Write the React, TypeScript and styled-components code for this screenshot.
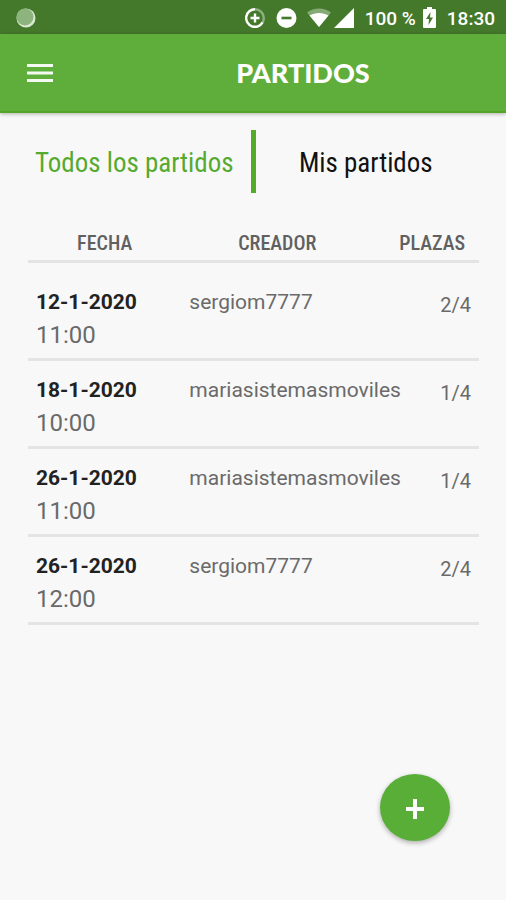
import React, { useState } from "react";
import styled, { createGlobalStyle } from "styled-components";

const GlobalStyle = createGlobalStyle`
  *, *::before, *::after { box-sizing: border-box; }
  body {
    margin: 0;
    background: #f8f8f8;
    color: #6a6a6a;
    font-family: Roboto, "Liberation Sans", sans-serif;
  }
  button { font: inherit; border: 0; background: none; padding: 0; cursor: pointer; }
`;

const Screen = styled.div`
  display: flex;
  flex-direction: column;
  min-height: 100vh;
`;

const StatusBar = styled.div`
  display: flex;
  align-items: center;
  justify-content: space-between;
  height: 34px;
  padding: 1px 11px 0 16px;
  background: #44792b;
  color: #fff;
`;

const StatusGroup = styled.div`
  display: flex;
  align-items: center;
`;

const StatusIcon = styled.svg<{ $gap?: number }>`
  display: block;
  flex: none;
  margin-right: ${(p) => p.$gap ?? 0}px;
`;

const StatusText = styled.span<{ $gap?: number }>`
  padding-top: 2px;
  font-size: 19px;
  line-height: 24px;
  font-weight: 500;
  white-space: nowrap;
  margin-right: ${(p) => p.$gap ?? 0}px;
`;

const AppBar = styled.header`
  display: grid;
  grid-template-columns: 80px 1fr;
  align-items: center;
  height: 79px;
  background: #5fae3c;
  border-bottom: 2px solid #54a525;
  box-shadow: 0 1px 4px rgba(0, 0, 0, 0.3);
`;

const MenuButton = styled.button`
  display: flex;
  align-items: center;
  justify-content: center;
  width: 80px;
  height: 48px;
`;

const Title = styled.h1`
  margin: 0;
  padding-left: 20px;
  text-align: center;
  color: #fff;
  font-family: Lato, "Liberation Sans", sans-serif;
  font-size: 27px;
  line-height: 32px;
  font-weight: 900;
`;

const Tabs = styled.div`
  display: grid;
  grid-template-columns: 1fr 5px 1fr;
  align-items: center;
  margin-top: 17px;
`;

const Tab = styled.button<{ $active: boolean }>`
  && {
    padding-top: 3px;
    font-family: "Roboto Condensed", "Liberation Sans Narrow", Roboto, sans-serif;
    font-size: 27px;
    line-height: 60px;
    white-space: nowrap;
    color: ${(p) => (p.$active ? "#55aa2f" : "#111")};
  }
  &&:first-child { padding-left: 18px; }
  &&:last-child { padding-right: 30px; }
`;

const TabDivider = styled.div`
  height: 63px;
  background: #54ab28;
`;

const TableArea = styled.main`
  padding: 37px 27px 0 28px;
`;

const Table = styled.table`
  width: 100%;
  table-layout: fixed;
  border-collapse: collapse;
`;

const HeadCell = styled.th<{ $width: string; $align?: string; $end?: number }>`
  width: ${(p) => p.$width};
  padding: 0 ${(p) => p.$end ?? 0}px 4px 0;
  border-bottom: 3px solid #e4e4e4;
  text-align: ${(p) => p.$align ?? "center"};
  font-family: "Roboto Condensed", "Liberation Sans Narrow", Roboto, sans-serif;
  font-size: 20px;
  line-height: 26px;
  font-weight: 500;
  color: #606060;
  white-space: nowrap;
`;

const Row = styled.tr`
  &:first-child > td { padding-top: 24px; }
`;

const Cell = styled.td<{ $end?: boolean }>`
  padding: 14px 8px 7px;
  border-bottom: 3px solid #e4e4e4;
  vertical-align: top;
  text-align: ${(p) => (p.$end ? "right" : "left")};
  white-space: nowrap;
`;

const DateText = styled.div`
  font-size: 21px;
  line-height: 30px;
  font-weight: 700;
  color: #222;
`;

const TimeText = styled.div`
  padding-top: 2px;
  font-size: 24px;
  line-height: 32px;
`;

const Creator = styled.div`
  font-size: 21px;
  line-height: 30px;
`;

const Places = styled.div`
  padding-top: 3px;
  font-size: 20px;
  line-height: 30px;
`;

const BottomBar = styled.div`
  display: flex;
  justify-content: flex-end;
  margin-top: auto;
  padding: 0 56px 59px;
`;

const AddButton = styled.button`
  && {
    display: flex;
    align-items: center;
    justify-content: center;
    width: 70px;
    height: 67px;
    padding-top: 3px;
    border-radius: 50%;
    background: #59ae37;
    box-shadow: 0 2px 5px rgba(0, 0, 0, 0.3);
  }
`;

const matches = [
  { date: "12-1-2020", time: "11:00", creator: "sergiom7777", places: "2/4" },
  { date: "18-1-2020", time: "10:00", creator: "mariasistemasmoviles", places: "1/4" },
  { date: "26-1-2020", time: "11:00", creator: "mariasistemasmoviles", places: "1/4" },
  { date: "26-1-2020", time: "12:00", creator: "sergiom7777", places: "2/4" },
];

export default function App() {
  const [tab, setTab] = useState("all");
  return (
    <Screen>
      <GlobalStyle />
      <StatusBar>
        <StatusIcon width="20" height="20" viewBox="0 0 20 20" aria-hidden="true">
          <circle cx="10" cy="10" r="9.5" fill="#dce9d5" />
          <circle cx="9" cy="9" r="8.5" fill="#8db47d" />
        </StatusIcon>
        <StatusGroup>
          <StatusIcon $gap={11} width="20" height="20" viewBox="0 0 20 20" fill="none" strokeWidth="2.4" aria-hidden="true">
            <path d="M10 1.2a8.8 8.8 0 0 1 8.8 8.8c0 1.6-.4 3-1.2 4.4" stroke="#8fb080" />
            <path d="M10 1.2a8.8 8.8 0 1 0 7.6 13.2" stroke="#fff" />
            <path d="M10 5.5v9M5.5 10h9" stroke="#fff" />
          </StatusIcon>
          <StatusIcon $gap={10} width="21" height="20" viewBox="0 0 21 20" aria-hidden="true">
            <circle cx="10.5" cy="10" r="10" fill="#fff" />
            <path d="M5.5 10h10" stroke="#44792b" strokeWidth="2.6" />
          </StatusIcon>
          <StatusIcon $gap={3} width="24" height="20" viewBox="0 0 24 20" aria-hidden="true">
            <path d="M0 4.5C7-1 17-1 24 4.5L12 19z" fill="#86aa76" />
            <path d="M2.500 7.500C8 4 16 4 21.500 7.500L12 19z" fill="#fff" />
          </StatusIcon>
          <StatusIcon $gap={11} width="20" height="20" viewBox="0 0 20 20" aria-hidden="true">
            <path d="M20 0v20H0z" fill="#fff" />
          </StatusIcon>
          <StatusText $gap={7}>100 %</StatusText>
          <StatusIcon $gap={11} width="13" height="21" viewBox="0 0 13 21" aria-hidden="true">
            <path d="M4 0h5v2h3q1 0 1 1v17q0 1-1 1H1q-1 0-1-1V3q0-1 1-1h3z" fill="#fff" />
            <path d="M7.500 5 3 12h3l-.5 6L10 10.500H7z" fill="#44792b" />
          </StatusIcon>
          <StatusText>18:30</StatusText>
        </StatusGroup>
      </StatusBar>
      <AppBar>
        <MenuButton aria-label="Menú">
          <svg width="26" height="18" viewBox="0 0 26 18" aria-hidden="true">
            <path d="M0 1.500h26M0 9h26M0 16.500h26" stroke="#f4faf1" strokeWidth="3" />
          </svg>
        </MenuButton>
        <Title>PARTIDOS</Title>
      </AppBar>
      <Tabs role="tablist">
        <Tab role="tab" aria-selected={tab === "all"} $active={tab === "all"} onClick={() => setTab("all")}>
          Todos los partidos
        </Tab>
        <TabDivider />
        <Tab role="tab" aria-selected={tab === "mine"} $active={tab === "mine"} onClick={() => setTab("mine")}>
          Mis partidos
        </Tab>
      </Tabs>
      <TableArea>
        <Table>
          <thead>
            <tr>
              <HeadCell $width="34%">FECHA</HeadCell>
              <HeadCell $width="47%" $end={20}>CREADOR</HeadCell>
              <HeadCell $width="19%" $align="right" $end={14}>PLAZAS</HeadCell>
            </tr>
          </thead>
          <tbody>
            {matches.map((m, i) => (
              <Row key={i}>
                <Cell>
                  <DateText>{m.date}</DateText>
                  <TimeText>{m.time}</TimeText>
                </Cell>
                <Cell><Creator>{m.creator}</Creator></Cell>
                <Cell $end><Places>{m.places}</Places></Cell>
              </Row>
            ))}
          </tbody>
        </Table>
      </TableArea>
      <BottomBar>
        <AddButton aria-label="Añadir partido">
          <svg width="18" height="20" viewBox="0 0 18 20" aria-hidden="true">
            <path d="M9 0v20M0 10h18" stroke="#fff" strokeWidth="4" />
          </svg>
        </AddButton>
      </BottomBar>
    </Screen>
  );
}
